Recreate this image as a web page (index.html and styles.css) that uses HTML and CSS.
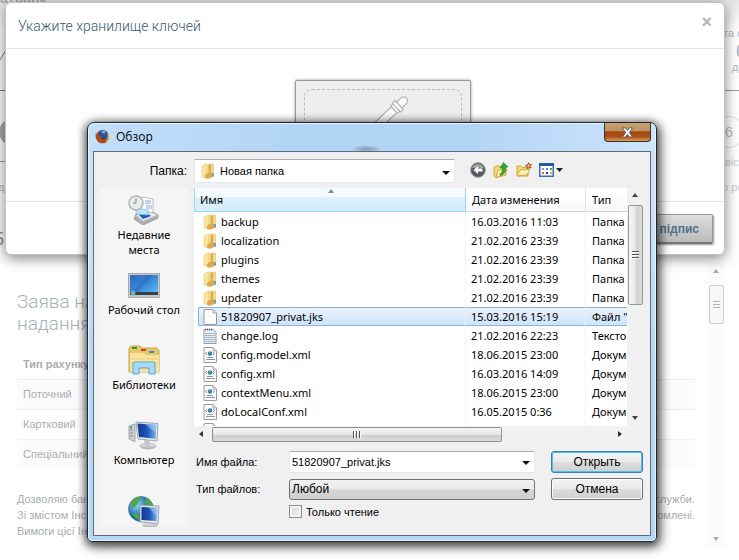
FILE: index.html
```html
<!DOCTYPE html>
<html lang="ru">
<head>
<meta charset="utf-8">
<title>Обзор</title>
<link rel="stylesheet" href="styles.css">
</head>
<body>
<svg class="defs" aria-hidden="true">
  <defs>
    <linearGradient id="gFold" x1="0" x2="1"><stop offset="0" stop-color="#faeeb4"/><stop offset="1" stop-color="#efd37c"/></linearGradient>
    <linearGradient id="gScreen" x1="0" y1="0" x2="1" y2="1"><stop offset="0" stop-color="#2a6bbd"/><stop offset=".5" stop-color="#3a86d6"/><stop offset="1" stop-color="#5cc0f8"/></linearGradient>
    <linearGradient id="gMon" x1="0" y1="0" x2="1" y2="0"><stop offset="0" stop-color="#123a94"/><stop offset=".5" stop-color="#1d56b8"/><stop offset="1" stop-color="#7ab8ee"/></linearGradient>
    <linearGradient id="gGrey" x1="0" y1="0" x2="0" y2="1"><stop offset="0" stop-color="#f4f4f4"/><stop offset="1" stop-color="#a8acb0"/></linearGradient>
    <radialGradient id="gGlobe" cx=".35" cy=".35"><stop offset="0" stop-color="#8fd4f6"/><stop offset="1" stop-color="#1a5fae"/></radialGradient>
  </defs>
  <symbol id="folder" viewBox="0 0 14 16">
    <path d="M1 3 6 .5v15L1 13.500z" fill="#f8e69c" stroke="#e6cb7a" stroke-width=".6"/>
    <path d="M6 2.500 8 1h4.500v12.500L7 15.500H6z" fill="url(#gFold)" stroke="#e0bd63" stroke-width=".5"/>
    <path d="M7.500 1.500H10V8L7.500 10z" fill="#dda94a"/>
    <path d="M4 12 6.500 10l3-1.500L11 10v4l-4 1.500-3-1z" fill="#e0a84c"/>
    <path d="M11.200 10h1.500v3.500h-1.500z" fill="#3b8fd8"/>
  </symbol>
  <symbol id="blank" viewBox="0 0 14 16"><path d="M1 .5h9l3.500 3.500v11.500H1z" fill="#fbfbfb" stroke="#9b9b9b"/><path d="M10 .5V4h3.500" fill="#ddd" stroke="#aaa"/></symbol>
  <symbol id="log" viewBox="0 0 14 16"><path d="M1 1.500h9l3 2.500v11.500H1z" fill="#e9f0f4" stroke="#8f9ba3"/><path d="M2 5.500h10M2 7.500h10M2 9.500h10M2 11.500h10M2 13.500h10" stroke="#9fb9c9"/><path d="M2 1.500h8" stroke="#777" stroke-dasharray="1 1" stroke-width="2"/></symbol>
  <symbol id="xml" viewBox="0 0 14 16"><path d="M1 .5h9l3.500 3.500v11.500H1z" fill="#fcfcfc" stroke="#9b9b9b"/><path d="M10 .5V4h3.500" fill="#ddd" stroke="#aaa"/><circle cx="7" cy="6.500" r="2.200" fill="#2f79b8"/><path d="M6 5h1.500v2H6z" fill="#63b04e"/><path d="M3.800 5.200 2.500 6.500l1.300 1.300M10.200 5.200l1.300 1.300-1.300 1.300" fill="none" stroke="#555" stroke-width=".8"/><path d="M4 10.500h6M3 12.500h9" stroke="#8498b2"/></symbol>
  <symbol id="monitor" viewBox="0 0 32 30">
    <path d="M1 6 7 4v18l-6-3z" fill="#cfd3d6" stroke="#888f95" stroke-width=".7"/><path d="M2 10h3M2 13h3M2 16h3" stroke="#7d868c"/><path d="M2 7.500h2" stroke="#42a33a" stroke-width="2"/>
    <ellipse cx="20" cy="26" rx="8" ry="3" fill="url(#gGrey)" stroke="#a1a6aa" stroke-width=".6"/><path d="m16 20 6 1v5h-5z" fill="#c4c8cb"/>
    <path d="m8 2 22 1.500L29 21 10 19z" fill="#e3e7ea" stroke="#8b949c" stroke-width=".8"/><path d="m9.500 3.500 19 1.300-1 14L11 17z" fill="url(#gMon)"/><path d="m17 4 11.500.800-1 8z" fill="#b5dcfa" opacity=".5"/>
  </symbol>
</svg>

<main class="page">
  <div class="steps" aria-hidden="true">
    <svg class="steps-left" viewBox="0 0 60 255"><path d="M0 60 7 48M0 90.500h8" stroke="#777c86" fill="none"/><circle cx="12" cy="132" r="13" fill="#aaa"/><path d="M0 161.500h6" stroke="#999"/></svg>
    <span class="brand">атбанк</span>
    <span class="da">да</span>
    <span class="num">5</span>
    <div class="steps-right">
      <span class="s1">та о</span><span class="s2">0</span><span class="s3">дз</span>
      <span class="s4">6</span><span class="s5">звіс</span><span class="s6">о ро</span>
    </div>
  </div>
  <section class="form-area">
    <div class="form">
      <h1>Заява на<br>надання</h1>
      <table class="accounts">
        <thead><tr><th>Тип рахунку</th></tr></thead>
        <tbody><tr><td>Поточний</td></tr><tr><td>Картковий</td></tr><tr><td>Спеціальний</td></tr></tbody>
      </table>
      <div class="terms">
        <p><span>Дозволяю бан</span><span>служби.</span></p>
        <p><span>Зі змістом Інс</span><span>омлені.</span></p>
        <p><span>Вимоги цієї Інс</span></p>
      </div>
    </div>
    <div class="bar-v page-bar"><i class="up"></i><b class="thumb"></b><i class="down"></i></div>
  </section>
</main>

<section class="modal">
  <header><h2>Укажите хранилище ключей</h2><button class="x" aria-label="Закрыть">×</button></header>
  <div class="modal-body">
    <div class="drop"><div class="drop-in">
      <svg viewBox="0 0 60 60"><g transform="rotate(47 30 30)" fill="#fafafa" stroke="#aaa" stroke-width="1"><path d="M26 12h8v40l-4 6-4-6z"/><path d="M24 5h12v4H24zM25 9h10v3H25z"/><path d="M26 5v-7q4-6 8 0v7z"/></g></svg>
    </div></div>
  </div>
  <footer><button class="sign">підпис</button></footer>
</section>

<section class="win" role="dialog" aria-labelledby="wt">
  <div class="titlebar">
    <svg class="fox" viewBox="0 0 16 16"><circle cx="8" cy="8" r="7" fill="#c35a17"/><circle cx="8.500" cy="6.500" r="5.300" fill="#234f9b"/><path d="M7 2q3-1 5 1l-2 2-3-.5z" fill="#5eaae4"/><path d="M1 4q1 3 4 3l3 .5-2 2q1 3 5 2 3-1 3.500-5 1 5-2.500 7.500T4 14Q-.5 10.500 1 4z" fill="#b54912"/><path d="M13 3q3 3 1.800 7Q14 13 11 14q3-3 2.500-6z" fill="#efad39"/></svg>
    <span id="wt">Обзор</span>
    <button class="close" aria-label="Закрыть окно"><svg viewBox="0 0 14 12"><path d="M1.500 1h3.300L7 3.800 9.200 1h3.300L9 6l3.500 5H9.200L7 8.200 4.800 11H1.500L5 6z" fill="#fff" stroke="#525a66"/></svg></button>
  </div>
  <div class="client">
    <div class="look">
      <label for="dir">Папка:</label>
      <div class="combo dir"><svg class="ic"><use href="#folder"/></svg><select id="dir"><option>Новая папка</option></select></div>
      <div class="tools">
        <button aria-label="Назад"><svg viewBox="0 0 16 16"><circle cx="8" cy="8" r="7.300" fill="#555b61" stroke="#8b9096"/><path d="M2 6a6.500 6.500 0 0 1 12 0z" fill="#9da2a7"/><path d="M3.500 8 8 4v2.500h4.500v3H8V12z" fill="#fff"/></svg></button>
        <button aria-label="Вверх"><svg viewBox="0 0 16 16"><path d="M1 5 6 3.500l1 1.500h6v8L3 15.500 1 14z" fill="#f5da7d" stroke="#d8a63f"/><path d="M3 15.500 5 8l9-1-2 6z" fill="#fbeeb0" stroke="#d8a63f"/><path d="M7 12q3-1 2.500-6H7L10.500.5 15 5h-2.500q1 7-5.500 8.500z" fill="#2eaa34" stroke="#168022" stroke-width=".6"/></svg></button>
        <button aria-label="Новая папка"><svg viewBox="0 0 16 16"><path d="M1 4h4l1 1.500h6V14H1z" fill="#f2d577" stroke="#d3a646"/><path d="m1 14 3-6 10-1-3 6z" fill="#fcf0b7" stroke="#d3a646"/><path d="m12.500.500 1 2 2.200-.2-1.500 1.700 1 2-2.200-.6L11.500 7l-.2-2.200-2-1 2-.8z" fill="#d9742c" stroke="#8b3b16" stroke-width=".6"/><circle cx="12.600" cy="3.800" r="1" fill="#ffe27e"/></svg></button>
        <button class="view" aria-label="Вид"><svg viewBox="0 0 24 16"><path d="M.8 1.800h13.400v12.400H.8z" fill="#fff" stroke="#2c6fc0" stroke-width="1.500"/><path d="M0 1h15v3H0z" fill="#2459a8"/><path d="M3 6h2v2H3z" fill="#8a9db5"/><path d="M7 6h2v2H7z" fill="#5a88c8"/><path d="M11 6h2v2h-2z" fill="#3da34a"/><path d="M3 10h2v2H3z" fill="#cf6a3b"/><path d="M7 10h2v2H7z" fill="#2340a4"/><path d="M11 10h2v2h-2z" fill="#e2a93b"/><path d="M17 6h7l-3.500 4z" fill="#222"/></svg></button>
      </div>
    </div>
    <div class="main">
      <nav class="places">
        <a href="#"><svg viewBox="0 0 32 30"><path d="m8 19 14-4 8 5v3l-15 7-9-6z" fill="#aeb2b5" stroke="#84898d" stroke-width=".7"/><path d="m8 20 14-4 7 4-14 6z" fill="#e5e7e8"/><path d="m11 20 8-2 4 3-8 3z" fill="#1f5fae"/><path d="m14 2 11 2v14l-13-3z" fill="#fff" stroke="#9fa5aa" stroke-width=".7"/><path d="M17 6h6M17 8h6M18 11h6M18 13h6" stroke="#7daede"/><path d="m8 13 12 2v5L8 19z" fill="#bfe6fb" stroke="#79b7df" stroke-width=".7"/><circle cx="8" cy="8" r="7" fill="#e9ebec" stroke="#b0b4b7" stroke-width="1.500"/><path d="M8 3v5H5" stroke="#80878c" fill="none"/></svg>Недавние места</a>
        <a href="#"><svg viewBox="0 0 32 30"><path d="M.5 3.500h31v24H.5z" fill="#c9c9c6" stroke="#a9a9a6"/><path d="M2 5h28v19H2z" fill="url(#gScreen)"/><path d="M2 24 19 5h6L8 24z" fill="#1750a0" opacity=".25"/><path d="M2 22h28v3H2z" fill="#353f4a"/><circle cx="5" cy="23" r="2.500" fill="#56a9d8"/><path d="M4 22h2v2H4z" fill="#e69a36"/></svg>Рабочий стол</a>
        <a href="#"><svg viewBox="0 0 32 30"><path d="M1 3 3 1h9l2 2h15l2 3v21H1z" fill="#e7c664" stroke="#c9a448"/><path d="M4 2h5v2H4z" fill="#2b9c3a"/><path d="M13 4h5v2h-5z" fill="#c0402d"/><path d="M21 6h5v2h-5z" fill="#3d86d0"/><path d="M2 8h14l2 2h13v17H2z" fill="#f6e49c"/><path d="M3 14h27M3 18h27" stroke="#ecd17a"/><path d="M5 29V19q0-2 2-2h18q2 0 2 2v10h-6v-6H11v6z" fill="#a8daf6" stroke="#5ba3d6"/></svg>Библиотеки</a>
        <a href="#"><svg viewBox="0 0 32 30"><use href="#monitor"/></svg>Компьютер</a>
        <a href="#" aria-label="Сеть"><svg class="tall" viewBox="0 0 32 34"><circle cx="13" cy="14" r="12.500" fill="url(#gGlobe)" stroke="#3a6fa2" stroke-width=".7"/><path d="M3 7q5-6 11-5l-3 4-2 4-5 4zM4 18l6 1 2 6q-6-1-8-7zM18 3q5 1 7 7l-5 1-3-4z" fill="#4da944"/><ellipse cx="22" cy="30" rx="8" ry="3" fill="url(#gGrey)"/><path d="m12 10 19 1-1 18-18-2z" fill="#e3e7ea" stroke="#87919b" stroke-width=".8"/><path d="m13.500 12 16 .8-1 13.200-15-1z" fill="url(#gMon)"/><path d="m20 12 9.500.800-1 8z" fill="#b5dcfa" opacity=".5"/></svg></a>
      </nav>
      <div class="right">
        <div class="list">
          <div class="files">
            <table>
              <colgroup><col class="c1"><col class="c2"><col class="c3"></colgroup>
              <thead><tr><th class="sorted">Имя</th><th>Дата изменения</th><th>Тип</th></tr></thead>
              <tbody>
                <tr><td><div><svg class="ic"><use href="#folder"/></svg>backup</div></td><td>16.03.2016 11:03</td><td>Папка</td></tr>
                <tr><td><div><svg class="ic"><use href="#folder"/></svg>localization</div></td><td>21.02.2016 23:39</td><td>Папка</td></tr>
                <tr><td><div><svg class="ic"><use href="#folder"/></svg>plugins</div></td><td>21.02.2016 23:39</td><td>Папка</td></tr>
                <tr><td><div><svg class="ic"><use href="#folder"/></svg>themes</div></td><td>21.02.2016 23:39</td><td>Папка</td></tr>
                <tr><td><div><svg class="ic"><use href="#folder"/></svg>updater</div></td><td>21.02.2016 23:39</td><td>Папка</td></tr>
                <tr class="sel"><td><div><svg class="ic"><use href="#blank"/></svg>51820907_privat.jks</div></td><td>15.03.2016 15:19</td><td>Файл "</td></tr>
                <tr><td><div><svg class="ic"><use href="#log"/></svg>change.log</div></td><td>21.02.2016 22:23</td><td>Тексто</td></tr>
                <tr><td><div><svg class="ic"><use href="#xml"/></svg>config.model.xml</div></td><td>18.06.2015 23:00</td><td>Докум</td></tr>
                <tr><td><div><svg class="ic"><use href="#xml"/></svg>config.xml</div></td><td>16.03.2016 14:09</td><td>Докум</td></tr>
                <tr><td><div><svg class="ic"><use href="#xml"/></svg>contextMenu.xml</div></td><td>18.06.2015 23:00</td><td>Докум</td></tr>
                <tr><td><div><svg class="ic"><use href="#xml"/></svg>doLocalConf.xml</div></td><td>16.05.2015 0:36</td><td>Докум</td></tr>
                <tr><td><div><svg class="ic"><use href="#blank"/></svg></div></td><td></td><td></td></tr>
              </tbody>
            </table>
          </div>
          <div class="bar-v list-bar"><i class="up"></i><b class="thumb"></b><i class="down"></i></div>
          <div class="bar-h"><i class="lt"></i><b class="thumb"></b><i class="rt"></i></div>
        </div>
        <form class="fields">
          <label for="fn">Имя файла:</label>
          <div class="combo name"><input id="fn" type="text" value="51820907_privat.jks"></div>
          <button type="button" class="btn primary">Открыть</button>
          <label for="ft">Тип файлов:</label>
          <div class="combo grey"><select id="ft"><option>Любой</option></select></div>
          <button type="button" class="btn">Отмена</button>
          <label class="ro"><input type="checkbox">Только чтение</label>
        </form>
      </div>
    </div>
  </div>
</section>
</body>
</html>
```

FILE: styles.css
```css
* { box-sizing: border-box; }
body { margin: 0; background: #fff; font-family: "Liberation Sans", sans-serif; font-size: 12px; overflow: hidden; }
button, input, select { font: inherit; color: inherit; margin: 0; }
h1, h2, p { margin: 0; font-weight: 400; }
.defs { position: absolute; width: 0; height: 0; }

/* page behind the dialogs */
.page { min-height: 100vh; }
.steps { position: relative; height: 262px; overflow: hidden; background: linear-gradient(#e6e6e6, #fff 30px); color: #b4b8be; }
.steps-left { position: absolute; left: 0; top: 0; width: 60px; height: 255px; }
.brand { position: absolute; left: 0; top: -10px; font-size: 14px; font-weight: 700; color: #aaa; }
.da { position: absolute; left: -2px; top: 181px; font-size: 11px; }
.num { position: absolute; left: -6px; top: 229px; font-size: 18px; color: #8a929c; }
.steps-right { position: absolute; right: 0; top: 0; width: 20px; height: 262px; }
.steps-right::before { content: ""; position: absolute; left: 0; top: 90px; width: 20px; height: 1px; background: #999; }
.steps-right span { position: absolute; left: 4px; white-space: nowrap; font-size: 11px; }
.steps-right .s1 { top: 27px; }
.steps-right .s2 { top: 40px; left: 17px; font-size: 20px; }
.steps-right .s3 { top: 61px; left: 13px; }
.steps-right .s4 { top: 116px; left: -6px; width: 32px; height: 32px; border: 1px solid #ddd; border-radius: 50%; font-size: 15px; line-height: 30px; text-align: center; color: #bbb; }
.steps-right .s5 { top: 156px; left: 1px; color: #ccd0d5; }
.steps-right .s6 { top: 181px; left: 3px; color: #ccd0d5; }
.form-area { display: flex; justify-content: space-between; padding-right: 15px; }
.form { flex: 1; margin: 29px 13px 0 17px; font-size: 11px; color: #a9adb0; }
.form h1 { font: 300 19px/22px Roboto, sans-serif; color: #a8b0b8; }
.accounts { width: 100%; margin-top: 14px; border-collapse: collapse; }
.accounts th, .accounts td { height: 30px; padding: 0 6px; text-align: left; border-bottom: 1px solid #eee; }
.accounts tr:nth-child(odd) td { background: #fbfbfb; }
.accounts tr:last-child td { border-bottom: 0; }
.terms { margin-top: 22px; line-height: 16px; }
.terms p { display: flex; justify-content: space-between; }

/* scrollbars */
.bar-v { position: relative; display: flex; flex-direction: column; align-items: center; width: 16px; background: #f1f1f1; }
.bar-v i, .bar-h i { flex: none; border: 3px solid transparent; }
.bar-v .up { margin: 5px 0 8px; border-top: 0; border-bottom: 4px solid #444; }
.bar-v .down { margin: auto 0 6px; border-bottom: 0; border-top: 4px solid #444; }
.bar-v .thumb { display: grid; place-items: center; width: 15px; height: 100px; border: 1px solid #979797; border-radius: 2px; background: linear-gradient(90deg, #f5f5f5, #e6e6e6 50%, #cfcfcf 52%, #dcdcdc); }
.bar-v .thumb::after { content: ""; width: 7px; height: 8px; background: repeating-linear-gradient(#555 0 1px, #fff 1px 2px, transparent 2px 3px); }
.page-bar { height: 285px; background: #f8f8f8; opacity: .45; }
.page-bar .up { margin: 7px 0 12px; }
.page-bar .thumb { height: 39px; background: #f0f0f0; }
.bar-h { display: flex; align-items: center; height: 16px; background: #f1f1f1; }
.bar-h .lt { margin: 0 9px 0 5px; border-left: 0; border-right: 4px solid #333; }
.bar-h .rt { margin: 0 5px 0 auto; border-right: 0; border-left: 4px solid #333; }
.bar-h .thumb { display: grid; place-items: center; width: 67%; height: 15px; border: 1px solid #8f8f94; border-radius: 2px; background: linear-gradient(#f5f5f5, #e6e6e6 50%, #cccccf 52%, #dcdcdc); }
.bar-h .thumb::after { content: ""; width: 8px; height: 7px; background: repeating-linear-gradient(90deg, #555 0 1px, #fff 1px 2px, transparent 2px 3px); }

/* key storage modal */
.modal { position: absolute; left: 5px; right: 14px; top: 2px; background: #fff; border: 1px solid #c4c4c4; border-radius: 6px; box-shadow: 0 3px 14px rgba(0, 0, 0, .5); }
.modal header { display: flex; justify-content: space-between; align-items: center; height: 46px; padding: 0 12px; border-bottom: 1px solid #e5e5e5; }
.modal h2 { font: 300 14px Roboto, sans-serif; color: #355a70; }
.modal .x { padding: 0; margin: 0 0 8px; border: 0; background: none; color: #b5b5b5; font-size: 18px; line-height: 20px; font-weight: 700; }
.modal-body { height: 152px; padding-top: 31px; overflow: hidden; }
.drop { width: 176px; height: 160px; margin: 0 auto; padding: 8px; position: relative; left: 18px; border: 1px solid #999; border-radius: 2px; background: #eee; box-shadow: 0 0 3px #999; }
.drop-in { height: 140px; border: 1px dashed #bbb; border-radius: 8px; }
.drop svg { display: block; width: 60px; height: 60px; margin: 2px 0 0 46px; }
.modal footer { height: 53px; padding: 12px 11px; border-top: 1px solid #e5e5e5; text-align: right; }
.sign { height: 30px; padding: 0 13px 0 30px; border: 1px solid #999; border-bottom: 2px solid #777; border-radius: 2px; background: linear-gradient(#ddd, #bbb); color: #56708f; font-weight: 700; box-shadow: 1px 1px 2px #999; }

/* file dialog */
.win { position: absolute; left: 87px; right: 82px; top: 122px; padding: 0 5px 5px; border: 1px solid #1d2733; border-radius: 7px 7px 5px 5px; background: linear-gradient(90deg, #c2dffc, #b3d5f5 35%, #b3d5f5 68%, #cde4fc) top / 100% 29px no-repeat, linear-gradient(#cce2f8 20%, #b3d7f6 60%); box-shadow: inset 0 0 0 1px #eaf5ff, 0 2px 8px 2px rgba(0, 0, 0, .6), 3px 4px 14px rgba(0, 0, 0, .4); color: #000; font-size: 12px; }
.titlebar { display: flex; height: 28px; padding-left: 2px; background: radial-gradient(ellipse 16px 4px at 49% 26px, rgba(90, 110, 130, .6), transparent); }
.titlebar span { margin-left: 6px; font: 12px/28px "Open Sans", sans-serif; }
.fox { width: 15px; height: 15px; margin-top: 6px; }
.close { display: grid; place-items: center; width: 47px; height: 19px; margin: 0 0 0 auto; padding: 0; border: 1px solid #333; border-top: 0; border-radius: 0 0 4px 4px; background: linear-gradient(#cba26c, #b99264 45%, #a64716 48%, #ab4d18 75%, #daa052); }
.close svg { width: 13px; height: 11px; }
.client { padding: 7px 7px 8px 6px; border: 1px solid #5f6b78; background: #f0f0f0; }
.look { display: flex; height: 29px; }
.look label { width: 94px; padding-right: 7px; text-align: right; line-height: 24px; }
.combo { position: relative; background: #fff; border: 1px solid #e3e9ef; border-top-color: #abadb3; }
.combo::after { content: ""; position: absolute; right: 4px; top: 9px; border: 4px solid transparent; border-bottom: 0; border-top-color: #111; pointer-events: none; }
.combo select, .combo input { display: block; width: 100%; height: 100%; padding: 0 16px 0 2px; border: 0; outline: 0; background: none; appearance: none; }
.dir { flex: 1; height: 24px; }
.dir::after { top: 11px; }
.dir .ic { position: absolute; left: 6px; top: 3px; }
.dir select { padding-left: 25px; font-size: 11px; }
.ic { flex: none; width: 14px; height: 16px; }
.tools { display: flex; gap: 7px; width: 188px; padding: 3px 0 0 15px; }
.tools button { width: 16px; height: 16px; padding: 0; border: 0; background: none; }
.tools svg { display: block; width: 16px; height: 16px; }
.tools .view, .tools .view svg { width: 24px; }
.main { display: flex; gap: 6px; }
.places { display: flex; flex-direction: column; align-items: center; width: 88px; height: 339px; padding-top: 7px; background: #f5f5f5; overflow: hidden; font: 11px/15px "Noto Sans", sans-serif; }
.places a { display: flex; flex-direction: column; align-items: center; flex: none; width: 82px; height: 75px; color: #000; text-decoration: none; text-align: center; }
.places svg { flex: none; width: 32px; height: 30px; margin-bottom: 2px; }
.places .tall { height: 34px; }
.right { flex: 1; min-width: 0; }
.list { display: grid; grid-template-columns: minmax(0, 1fr) 16px; }
.files { height: 238px; overflow: hidden; background: #fff; }
.files table { width: 100%; table-layout: fixed; border-collapse: separate; border-spacing: 0; font: 11px/17px "Noto Sans", sans-serif; }
.c1 { width: 272px; }
.c2 { width: 120px; }
.files th { height: 24px; padding: 0 6px; text-align: left; font-weight: 400; border-right: 1px solid #e1e4e8; border-bottom: 1px solid #d5d5d5; background: linear-gradient(#fff 40%, #f6f7f9); white-space: nowrap; }
.files th.sorted { position: relative; padding-left: 5px; border: 1px solid #96d9f9; border-top: 0; background: linear-gradient(#f4fafe 9px, #dcf1fc 9px, #d5eefa); }
.files .sorted::after { content: ""; position: absolute; left: 133px; top: 1px; border: 3px solid transparent; border-top: 0; border-bottom: 4px solid #6c8da3; }
.files td { height: 19px; padding: 0 5px; border: 1px solid transparent; border-right-color: #edf5fb; border-left: 0; white-space: nowrap; overflow: hidden; }
.files th:last-child, .files td:last-child { padding-left: 6px; border-right: 0; }
.files td:first-child { padding: 0 0 0 4px; border-top: 0; border-bottom: 0; }
.files td div { display: flex; align-items: center; gap: 4px; height: 19px; padding-left: 4px; border: 1px solid transparent; border-right: 0; }
.sel td:nth-child(n+2) { border-top-color: #88b5dc; border-bottom-color: #88b5dc; background: linear-gradient(#e8f2fd, #cfe3fb); }
.sel td:first-child div { border-color: #88b5dc; border-radius: 2px 0 0 2px; background: linear-gradient(#e8f2fd, #cfe3fb); }
.fields { display: grid; grid-template-columns: 95px minmax(0, 1fr) 92px; row-gap: 5px; align-items: center; margin-top: 9px; }
.fields > label { padding-left: 2px; font-size: 11px; }
.fields .combo { height: 22px; margin-right: 16px; }
.fields .grey { height: 21px; border: 1px solid #707070; border-radius: 3px; background: linear-gradient(#f2f2f2, #e9e9e9 48%, #d5d5d5 52%, #cfcfcf); }
.name input { font-size: 11px; }
.btn { height: 22px; padding: 0; border: 1px solid #707070; border-radius: 3px; background: linear-gradient(#f3f3f3, #ebebeb 48%, #dcdcdc 52%, #cfcfcf); box-shadow: inset 0 0 0 1px #fafafa; }
.btn.primary { border-color: #3c7fb1; box-shadow: inset 0 0 0 1px #48c0f5; }
.fields .ro { grid-column: 2; display: flex; align-items: center; gap: 4px; padding: 0; font-size: 11px; }
.ro input { appearance: none; width: 13px; height: 13px; border: 1px solid #8e8f8f; background: linear-gradient(135deg, #cfd2d6, #f6f6f6); box-shadow: inset 0 0 0 2px #f4f4f4; }
```
